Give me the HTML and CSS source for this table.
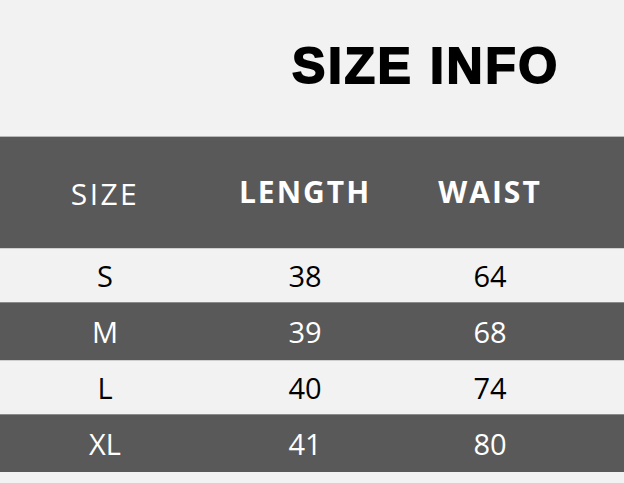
FILE: index.html
```html
<!DOCTYPE html>
<html>
<head>
<meta charset="utf-8">
<link rel="stylesheet" href="styles.css">
</head>
<body>
<div class="page">
  <header class="title-area">
    <h1 class="title">SIZE INFO</h1>
  </header>
  <div class="table">
    <div class="row head">
      <div class="cell light">SIZE</div>
      <div class="cell bold">LENGTH</div>
      <div class="cell bold">WAIST</div>
    </div>
    <div class="row odd">
      <div class="cell">S</div><div class="cell">38</div><div class="cell">64</div>
    </div>
    <div class="row even">
      <div class="cell">M</div><div class="cell">39</div><div class="cell">68</div>
    </div>
    <div class="row odd">
      <div class="cell">L</div><div class="cell">40</div><div class="cell">74</div>
    </div>
    <div class="row even">
      <div class="cell">XL</div><div class="cell">41</div><div class="cell">80</div>
    </div>
  </div>
</div>
</body>
</html>
```
FILE: styles.css
```css
html, body {
  margin: 0;
  padding: 0;
  background: #f2f2f2;
}
.page {
  width: 624px;
  height: 483px;
  overflow: hidden;
  background: #f2f2f2;
  font-family: "Open Sans", "Noto Sans", sans-serif;
}
.title-area {
  height: 136px;
  display: flex;
  align-items: flex-start;
  padding-left: 292px;
  box-sizing: border-box;
}
.title {
  margin: 0;
  margin-top: 36px;
  font-family: "Liberation Sans", Arial, sans-serif;
  font-weight: 900;
  font-size: 50px;
  line-height: 60px;
  letter-spacing: 2.6px;
  color: #000;
  -webkit-text-stroke: 1.8px #000;
}
.table {
  display: flex;
  flex-direction: column;
}
.row {
  display: grid;
  grid-template-columns: 210px 190px 180px;
  align-items: center;
  font-size: 29px;
}
.cell {
  text-align: center;
}
.head {
  height: 112px;
  background: #595959;
  color: #fff;
  border-top: 1px solid #b8b8b8;
  box-sizing: border-box;
  padding-top: 1px;
}
.head .cell {
  font-size: 30px;
  letter-spacing: 2px;
}
.head .light {
  font-weight: 400;
  letter-spacing: 2.4px;
}
.head .bold {
  font-weight: 700;
  padding-bottom: 4px;
}
.odd {
  height: 54px;
  background: #f2f2f2;
  color: #000;
  border-top: 1px solid #cfcfcf;
  box-sizing: border-box;
}
.even {
  height: 58px;
  background: #595959;
  color: #fff;
  border-top: 1px solid #8a8a8a;
  box-sizing: border-box;
}
```
